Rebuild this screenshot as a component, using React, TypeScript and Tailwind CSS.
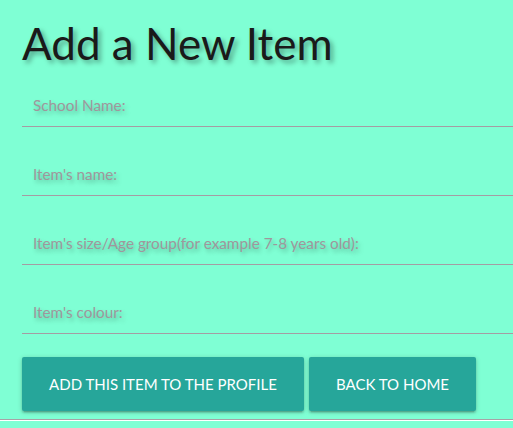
const fields = [
  "School Name:",
  "Item's name:",
  "Item's size/Age group(for example 7-8 years old):",
  "Item's colour:",
];

const btnShadow =
  "shadow-[0_2px_2px_0_rgba(0,0,0,0.14),0_3px_1px_-2px_rgba(0,0,0,0.12),0_1px_5px_0_rgba(0,0,0,0.2)]";

export default function App() {
  return (
    <div className="min-h-[428px] w-full bg-[#7fffd4] font-['Lato','Segoe_UI',sans-serif]">
      <div className="pl-[22px]">
        <h1 className="pt-[15px] text-[44px] leading-[56px] text-[#1a1a1a] [text-shadow:3px_3px_5px_rgba(0,0,0,0.35)]">
          Add a New Item
        </h1>
        <form className="mt-[14px] flex flex-col gap-[27px]">
          {fields.map((f) => (
            <div
              key={f}
              className="flex h-[42px] items-center border-b border-[#a59ca3] pl-[11px] text-[15.3px] text-[#9f979c] [text-shadow:2px_3px_4px_rgba(0,0,0,0.25)]"
            >
              {f}
            </div>
          ))}
        </form>
        <div className="mt-[23px] flex gap-[5px]">
          <button
            className={`h-[54px] w-[282px] rounded-[2px] bg-[#26a69a] text-[15px] uppercase text-white ${btnShadow}`}
          >
            Add this item to the profile
          </button>
          <button
            className={`h-[54px] w-[167px] rounded-[2px] bg-[#26a69a] text-[15px] uppercase text-white ${btnShadow}`}
          >
            Back to home
          </button>
        </div>
      </div>
      <div className="mt-[8px] border-t border-b border-t-[#a8a2a6] border-b-white" />
    </div>
  );
}
